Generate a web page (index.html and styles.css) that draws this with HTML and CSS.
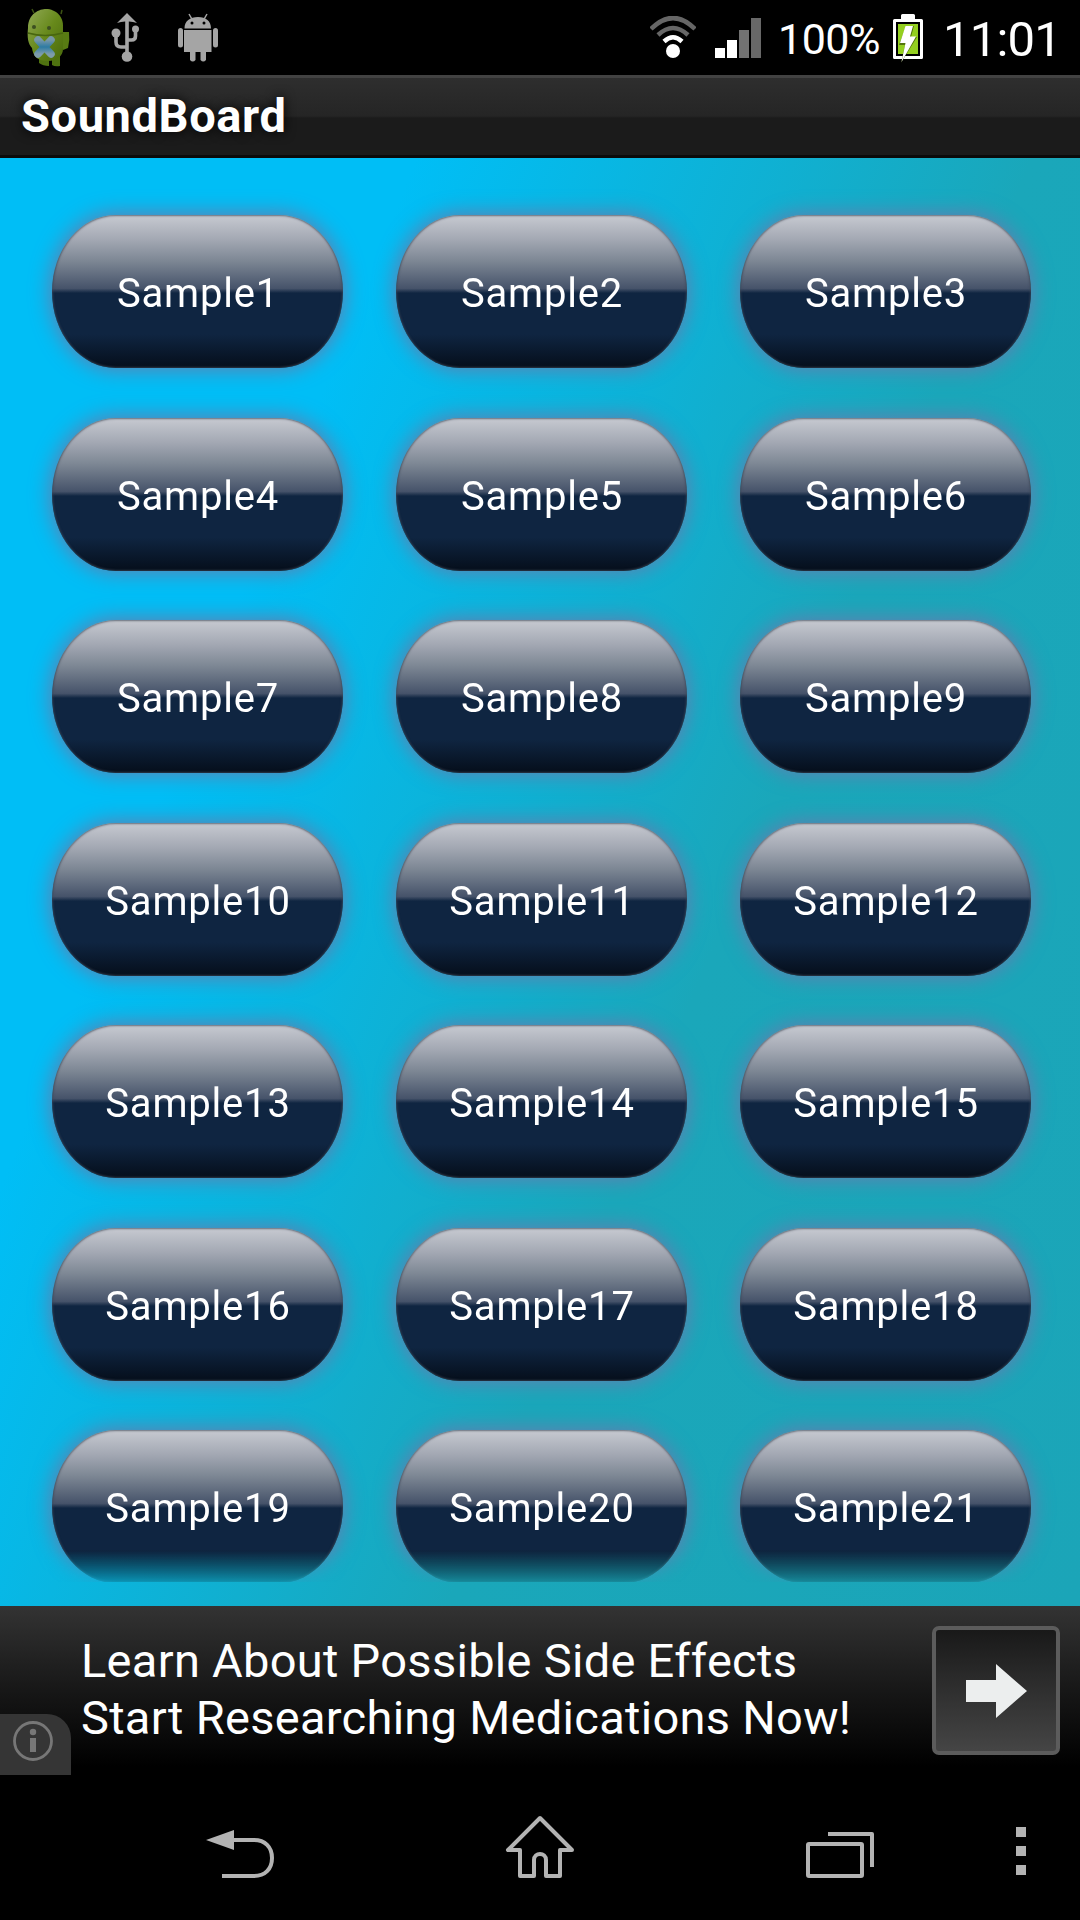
FILE: index.html
```html
<!DOCTYPE html>
<html lang="en">
<head>
<meta charset="utf-8">
<title>SoundBoard</title>
<link rel="stylesheet" href="styles.css">
</head>
<body>
<div class="phone">
  <header class="status">
    <div class="notices">
      <svg class="debug" width="46" height="60" viewBox="0 0 46 60">
        <defs>
          <linearGradient id="droid" x1="0" y1="0" x2="1" y2="1"><stop offset="0" stop-color="#91a956"/><stop offset=".5" stop-color="#67891b"/><stop offset="1" stop-color="#48690b"/></linearGradient>
          <linearGradient id="cross" x1="0" y1="0" x2="0" y2="1"><stop offset="0" stop-color="#7897a8"/><stop offset=".5" stop-color="#2d7ba3"/><stop offset="1" stop-color="#7e9cab"/></linearGradient>
        </defs>
        <path d="M8 5L6 1M35 6l1-4" stroke="#3c5213" stroke-width="1.5"/>
        <path d="M37 24h6q1 8-1 16l-5 2z" fill="#587b13"/>
        <path d="M13 46h10v12q-6 0-10-3zM26 46h8v12q-5 1-8-1z" fill="#4f7210"/>
        <path d="M2 20C2 5 14 1 20 1c10 0 18 8 17 18v22c0 7-6 12-15 12C10 53 7 47 6 40 2 36 1 29 2 20z" fill="url(#droid)"/>
        <path d="M2 25q17 5 35 0" fill="none" stroke="#486610" stroke-width="1.5"/>
        <circle cx="8" cy="19" r="2" fill="#3c4f20"/><circle cx="23" cy="20" r="2" fill="#3c4f20"/>
        <path d="M12 32l13 14M25 32L12 46" stroke="url(#cross)" stroke-width="7.5" stroke-linecap="round"/>
      </svg>
      <svg class="usb" width="30" height="50" viewBox="0 0 30 50">
        <g fill="#a5a5a5"><path d="M16 0l10 10q-5-2-10-1.500-5-.5-10 1.500z"/><circle cx="16" cy="43.500" r="5.300"/><circle cx="5" cy="20" r="4.500"/><circle cx="24.500" cy="16" r="3.500"/></g>
        <path d="M16 5v38M5 20v9q0 5 5 5h6M24.500 16v7q0 4-4 4H16" fill="none" stroke="#a5a5a5" stroke-width="3.600"/>
      </svg>
      <svg class="android" width="42" height="50" viewBox="0 0 42 50">
        <path d="M12 1l4 7M30 1l-4 7" stroke="#a5a5a5" stroke-width="1.500"/>
        <g fill="#a5a5a5"><path d="M7.500 15.500C7.500 8 13 4 21 4s13 4 13 11.500zM7 17h27.500v22H7z"/><rect x="1" y="15" width="5" height="19.500" rx="2.500"/><rect x="36" y="15" width="5" height="19.500" rx="2.500"/><path d="M13 38h5.500v9q-2.750 3-5.500 0zM23.500 38H29v9q-2.750 3-5.500 0z"/></g>
        <circle cx="15" cy="10" r="1.500"/><circle cx="27" cy="10" r="1.500"/>
      </svg>
    </div>
    <div class="system">
      <svg width="46" height="44" viewBox="0 0 46 44">
        <g fill="none"><path d="M1 13Q23-9 45 13" stroke="#666" stroke-width="4.500"/><path d="M8 19Q23 5 38 19" stroke="#666" stroke-width="4.500"/><path d="M14 25.500Q23 17 32 25.500" stroke="#fff" stroke-width="4.500"/></g>
        <circle cx="23" cy="35" r="7" fill="#fff"/>
      </svg>
      <svg class="signal" width="46" height="40" viewBox="0 0 46 40">
        <path d="M0 30h10v10H0zM12 22h10v18H12z" fill="#fff"/><path d="M24 12h10v28H24z" fill="#727272"/><path d="M36 0h10v40H36z" fill="#686868"/>
      </svg>
      <span class="percent">100%</span>
      <svg class="battery" width="30" height="50" viewBox="0 0 30 50">
        <path d="M8 1.500Q8 0 9.500 0h11Q22 0 22 1.500V5h6.500Q30 5 30 6.500v37q0 1.500-1.500 1.500h-27Q0 45 0 43.500v-37Q0 5 1.500 5H8z" fill="#fff"/>
        <path d="M3 8h24v34H3z"/><path d="M5 10h20v30H5z" fill="#94cf20"/>
        <path d="M13 12h8l-3 11h6L8 49l4-18H6z" fill="#314500" opacity=".65"/>
        <path d="M12.500 12h7.500l-3 10.500h6L8.500 48l4-19H7z" fill="#fff"/>
      </svg>
      <span class="clock">11:01</span>
    </div>
  </header>
  <h1 class="title">SoundBoard</h1>
  <main class="board">
    <div class="grid">
      <button class="pad">Sample1</button><button class="pad">Sample2</button><button class="pad">Sample3</button>
      <button class="pad">Sample4</button><button class="pad">Sample5</button><button class="pad">Sample6</button>
      <button class="pad">Sample7</button><button class="pad">Sample8</button><button class="pad">Sample9</button>
      <button class="pad">Sample10</button><button class="pad">Sample11</button><button class="pad">Sample12</button>
      <button class="pad">Sample13</button><button class="pad">Sample14</button><button class="pad">Sample15</button>
      <button class="pad">Sample16</button><button class="pad">Sample17</button><button class="pad">Sample18</button>
      <button class="pad">Sample19</button><button class="pad">Sample20</button><button class="pad">Sample21</button>
    </div>
  </main>
  <aside class="ad">
    <div class="info">
      <svg width="42" height="42" viewBox="0 0 42 42"><circle cx="21" cy="21" r="18.500" fill="none" stroke="#777" stroke-width="2.800"/><path d="M21 18v14" stroke="#777" stroke-width="6"/><circle cx="21" cy="12" r="3.200" fill="#777"/></svg>
    </div>
    <p class="copy">Learn About Possible Side Effects<br>Start Researching Medications Now!</p>
    <div class="go">
      <svg width="62" height="56" viewBox="0 0 62 56"><path d="M1 17h30V1l31 27-31 27V39H1z" fill="#eceeee"/></svg>
    </div>
  </aside>
  <nav class="nav">
    <svg class="back" width="70" height="50" viewBox="0 0 70 50"><path d="M0 11L28 1v20z" fill="#b3b3b3"/><path d="M27 11h21c11 0 18 7 18 18s-7 18-18 18H16" fill="none" stroke="#b3b3b3" stroke-width="4"/></svg>
    <svg class="home" width="70" height="66" viewBox="0 0 70 66"><path d="M35 4L3 36h12v26h14V46c0-8 12-8 12 0v16h14V36h12z" fill="none" stroke="#b3b3b3" stroke-width="4" stroke-linejoin="round"/></svg>
    <svg class="recent" width="70" height="48" viewBox="0 0 70 48"><rect x="3" y="13" width="54" height="32" rx="1" fill="none" stroke="#b3b3b3" stroke-width="4"/><path d="M23 3h44v33" fill="none" stroke="#b3b3b3" stroke-width="4" stroke-linejoin="round"/></svg>
    <svg class="more" width="10" height="48" viewBox="0 0 10 48"><path d="M0 0h10v10H0zM0 19h10v10H0zM0 38h10v10H0z" fill="#b3b3b3"/></svg>
  </nav>
</div>
</body>
</html>
```
FILE: styles.css
```css
* { box-sizing: border-box; margin: 0; }
body { background: #000; color: #fff; font-family: Roboto, sans-serif; }
svg { display: block; flex: none; }
.phone { width: 1080px; height: 1920px; display: flex; flex-direction: column; overflow: hidden; }
.status { height: 75px; display: flex; justify-content: space-between; }
.notices { display: flex; padding-left: 26px; }
.debug { margin-top: 8px; }
.usb { margin: 13px 0 0 39px; }
.android { margin: 13px 0 0 36px; }
.system { display: flex; padding: 16px 20px 0 0; }
.signal { margin: 2px 0 0 19px; }
.percent { width: 102px; margin: 0 0 0 17px; font-size: 43px; line-height: 46px; letter-spacing: -.5px; white-space: nowrap; }
.battery { margin: -2px 0 0 13px; }
.clock { width: 117px; margin: 0 0 0 20px; font-size: 49px; line-height: 47px; letter-spacing: -.8px; white-space: nowrap; }
.title {
  height: 83px; padding: 9px 0 0 21px;
  border-top: 3px solid #424242; border-bottom: 3px solid #0b0b0b;
  background: linear-gradient(#2e2e2e 0, #252525 38px, #1b1b1b 40px, #1b1b1b 100%);
  font-size: 47px; font-weight: 700; line-height: 57px; letter-spacing: .6px;
  text-shadow: 0 0 12px #000;
}
.board {
  height: 1448px;
  background: linear-gradient(112deg, #00bef6 0, #00bef6 25%, #1aa7ba 62%, #1ba5b8 100%);
}
.grid {
  height: 1424px; padding: 57px 0 0 52px; overflow: hidden;
  display: grid; grid-template-columns: repeat(3, 291px); grid-auto-rows: 153px;
  column-gap: 53px; row-gap: 49.500px; align-content: start;
  -webkit-mask-image: linear-gradient(#000 1393px, rgba(0,0,0,.2) 1424px);
  mask-image: linear-gradient(#000 1393px, rgba(0,0,0,.2) 1424px);
}
.pad {
  border: 0; padding: 5px 0 0 1px; color: #fff;
  border-radius: 64px / 77px;
  background: linear-gradient(#c7cad1 0, #a3a8b3 16%, #7d8794 30%, #46536a 48%, #0f2541 51%, #0f2541 78%, #06101e 98%);
  box-shadow: 0 0 20px 2px #607fb0, inset 0 0 2px 1px rgba(60,70,85,.7);
  font: 40px/46px Roboto, sans-serif;
  letter-spacing: .8px;
}
.ad { height: 169px; display: flex; background: linear-gradient(#333 0, #171717 50%, #000 95%); }
.info { width: 71px; height: 61px; margin-top: 108px; padding: 6px 0 0 12px; border-top-right-radius: 24px; background: #353535; flex: none; }
.copy { flex: 1; padding: 26px 0 0 10px; font-size: 47px; line-height: 57px; letter-spacing: .29px; white-space: nowrap; }
.go {
  width: 128px; height: 129px; margin: 20px 20px 0 0; flex: none;
  display: flex; align-items: center; justify-content: center;
  border: 4px solid #5c5c5c; border-radius: 7px; background: linear-gradient(#191919, #454545);
}
.nav { height: 145px; display: flex; }
.back { margin: 54px 0 0 206px; }
.home { margin: 39px 0 0 229px; }
.recent { margin: 56px 0 0 230px; }
.more { margin: 52px 0 0 141px; }
```
